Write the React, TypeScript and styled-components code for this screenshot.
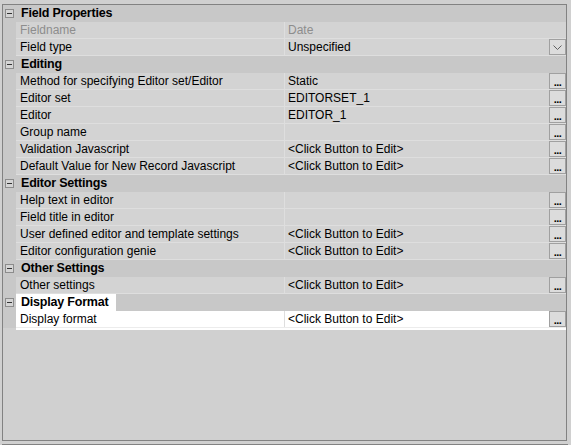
import React from "react";
import styled, { createGlobalStyle } from "styled-components";

const Global = createGlobalStyle`
  html, body { margin: 0; padding: 0; background: #f0f0f0; }
  body { font-family: "Liberation Sans", Arial, sans-serif; font-size: 12px; }
`;

const Page = styled.div`
  width: 571px;
  height: 445px;
  background: #d0d0d0;
  padding: 4px 4px 0 2px;
  box-sizing: border-box;
  display: flex;
  flex-direction: column;
`;

const Frame = styled.div`
  height: 437px;
  border: 1px solid #828282;
  background: #d0d0d0;
  box-sizing: border-box;
  display: flex;
  flex-direction: column;
  overflow: hidden;
`;

const Below = styled.div`
  margin-top: 3px;
  border-top: 1px solid #828282;
  width: 566px;
`;

const CatRow = styled.div`
  display: flex;
  height: 17px;
  background: #c8c8c8;
  align-items: stretch;
`;

const Gutter = styled.div`
  width: 13px;
  flex: none;
  background: #c8c8c8;
  display: flex;
  align-items: center;
  justify-content: center;
`;

const Toggle = styled.div`
  width: 9px;
  height: 9px;
  box-sizing: border-box;
  border: 1px solid #8c8c8c;
  background: #d4d4d4;
  display: flex;
  align-items: center;
  justify-content: center;
  &::after {
    content: "";
    width: 5px;
    height: 1px;
    background: #333;
  }
`;

const CatLabel = styled.div<{ $selected?: boolean }>`
  padding: 0 4px 0 5px;
  box-sizing: border-box;
  font-weight: bold;
  font-size: 12.5px;
  letter-spacing: -0.2px;
  line-height: 17px;
  color: #000;
  white-space: nowrap;
  background: ${(p) => (p.$selected ? "#ffffff" : "transparent")};
  width: ${(p) => (p.$selected ? "100px" : "auto")};
`;

const ItemRow = styled.div`
  display: flex;
  height: 17px;
  background: #c8c8c8;
`;

const Cells = styled.div<{ $selected?: boolean }>`
  flex: 1;
  display: flex;
  height: 17px;
  box-sizing: border-box;
  background: ${(p) => (p.$selected ? "#ffffff" : "#d3d3d3")};
  border-bottom: 1px solid ${(p) => (p.$selected ? "#ececec" : "#dedede")};
`;

const NameCell = styled.div<{ $muted?: boolean }>`
  width: 269px;
  flex: none;
  padding-left: 4px;
  box-sizing: border-box;
  line-height: 16px;
  color: ${(p) => (p.$muted ? "#8d8d8d" : "#000")};
  border-right: 1px solid #dedede;
  white-space: nowrap;
  overflow: hidden;
`;

const ValueCell = styled.div<{ $muted?: boolean }>`
  flex: 1;
  display: flex;
  align-items: center;
  padding-left: 3px;
  color: ${(p) => (p.$muted ? "#8d8d8d" : "#000")};
  line-height: 16px;
  white-space: nowrap;
`;

const ValueText = styled.span`
  flex: 1;
`;

const EditButton = styled.div`
  width: 17px;
  height: 16px;
  box-sizing: border-box;
  border: 1px solid #a0a0a0;
  background: #dcdcdc;
  display: flex;
  align-items: flex-end;
  justify-content: center;
  font-weight: bold;
  font-size: 11px;
  line-height: 11px;
  letter-spacing: -0.5px;
  color: #000;
  align-self: flex-start;
`;

const DropButton = styled(EditButton)`
  align-items: center;
  color: #606060;
`;

const WhiteTail = styled.div`
  margin-left: 13px;
  height: 2px;
  background: #ffffff;
`;

type Item = { name: string; value?: string; button?: "edit" | "drop"; muted?: boolean };
type Cat = { title: string; items: Item[] };

const CLICK = "<Click Button to Edit>";

const data: Cat[] = [
  {
    title: "Field Properties",
    items: [
      { name: "Fieldname", value: "Date", muted: true },
      { name: "Field type", value: "Unspecified", button: "drop" },
    ],
  },
  {
    title: "Editing",
    items: [
      { name: "Method for specifying Editor set/Editor", value: "Static", button: "edit" },
      { name: "Editor set", value: "EDITORSET_1", button: "edit" },
      { name: "Editor", value: "EDITOR_1", button: "edit" },
      { name: "Group name", value: "", button: "edit" },
      { name: "Validation Javascript", value: CLICK, button: "edit" },
      { name: "Default Value for New Record Javascript", value: CLICK, button: "edit" },
    ],
  },
  {
    title: "Editor Settings",
    items: [
      { name: "Help text in editor", value: "", button: "edit" },
      { name: "Field title in editor", value: "", button: "edit" },
      { name: "User defined editor and template settings", value: CLICK, button: "edit" },
      { name: "Editor configuration genie", value: CLICK, button: "edit" },
    ],
  },
  {
    title: "Other Settings",
    items: [{ name: "Other settings", value: CLICK, button: "edit" }],
  },
  {
    title: "Display Format",
    items: [{ name: "Display format", value: CLICK, button: "edit" }],
  },
];

const Chevron = () => (
  <svg width="9" height="5" viewBox="0 0 9 5">
    <path d="M0.5 0.5 L4.5 4.5 L8.5 0.5" fill="none" stroke="#606060" strokeWidth="1" />
  </svg>
);

export default function App() {
  return (
    <>
      <Global />
      <Page>
        <Frame>
          {data.map((cat) => {
            const sel = cat.title === "Display Format";
            return (
              <React.Fragment key={cat.title}>
                <CatRow>
                  <Gutter>
                    <Toggle />
                  </Gutter>
                  <CatLabel $selected={sel}>{cat.title}</CatLabel>
                </CatRow>
                {cat.items.map((it) => (
                  <ItemRow key={it.name}>
                    <Gutter />
                    <Cells $selected={sel}>
                      <NameCell $muted={it.muted}>{it.name}</NameCell>
                      <ValueCell $muted={it.muted}>
                        <ValueText>{it.value}</ValueText>
                        {it.button === "edit" && <EditButton>...</EditButton>}
                        {it.button === "drop" && (
                          <DropButton>
                            <Chevron />
                          </DropButton>
                        )}
                      </ValueCell>
                    </Cells>
                  </ItemRow>
                ))}
                {sel && <WhiteTail />}
              </React.Fragment>
            );
          })}
        </Frame>
        <Below />
      </Page>
    </>
  );
}
